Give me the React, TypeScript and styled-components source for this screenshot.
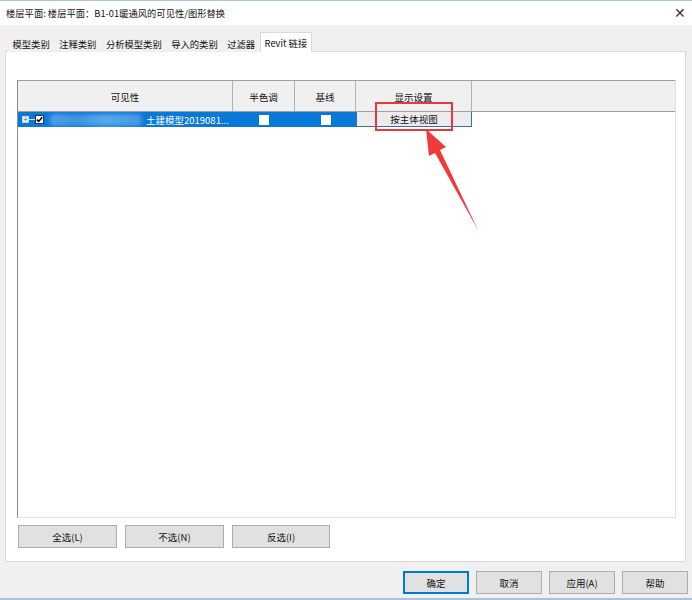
import React from 'react'
import styled, { createGlobalStyle } from 'styled-components'

const GlobalStyle = createGlobalStyle`
    html, body {
        margin: 0;
        padding: 0;
        background: #f0f0f0;
    }
    body {
        font-family: "Noto Sans CJK SC", "Microsoft YaHei", "Liberation Sans", sans-serif;
        font-size: 9.5px;
        color: #111;
    }
`

const Window = styled.div`
    position: relative;
    width: 692px;
    height: 600px;
    box-sizing: border-box;
    display: flex;
    flex-direction: column;
    background: #f0f0f0;
    border-top: 1px solid #a8c4dc;
    border-bottom: 2px solid #a8c4dc;
    overflow: hidden;
`

const TitleBar = styled.div`
    height: 24px;
    flex-shrink: 0;
    background: #ffffff;
    display: flex;
    align-items: center;
    justify-content: space-between;
    padding: 0 6px 0 6px;
    font-size: 9.3px;
`

const Close = styled.span`
    font-size: 14px;
    font-weight: 300;
    color: #333;
    line-height: 1;
    margin-top: -2px;
`

const Body = styled.div`
    flex: 1;
    display: flex;
    flex-direction: column;
    padding: 8px 6px 0 5px;
`

const TabStrip = styled.div`
    display: flex;
    align-items: flex-end;
    height: 18px;
    padding-left: 3px;
`

const Tab = styled.div<{ active?: boolean }>`
    height: ${p => (p.active ? '19px' : '16px')};
    padding: 0 3.5px;
    margin-right: ${p => (p.active ? '0' : '0.5px')};
    background: ${p => (p.active ? '#ffffff' : '#f0f0f0')};
    border: 1px solid ${p => (p.active ? '#d9d9d9' : 'transparent')};
    border-bottom: none;
    display: flex;
    align-items: center;
    font-size: 9.3px;
    white-space: nowrap;
    position: relative;
    top: 1px;
    z-index: ${p => (p.active ? 2 : 1)};
`

const TabPanel = styled.div`
    width: 681px;
    height: 511px;
    box-sizing: border-box;
    background: #ffffff;
    border: 1px solid #d9d9d9;
    display: flex;
    flex-direction: column;
    padding: 28px 9px 0 11px;
`

const GridBox = styled.div`
    height: 438px;
    box-sizing: border-box;
    border-left: 1px solid #8c8c8c;
    border-right: 1px solid #e0e0e0;
    border-bottom: 1px solid #e0e0e0;
    display: flex;
    flex-direction: column;
`

const Columns = '215px 62px 61px 116px 1fr'

const HeaderRow = styled.div`
    display: grid;
    grid-template-columns: ${Columns};
    height: 30px;
    background: #f0f0f0;
    border-top: 1px solid #a0a0a0;
    border-bottom: 1px solid #a0a0a0;
`

const HeaderCell = styled.div<{ last?: boolean }>`
    display: flex;
    align-items: center;
    justify-content: center;
    padding-top: 2px;
    border-right: ${p => (p.last ? 'none' : '1px solid #b4b4b4')};
    font-size: 9.5px;
`

const DataRow = styled.div`
    display: grid;
    grid-template-columns: ${Columns};
    height: 14px;
`

const BlueCell = styled.div<{ center?: boolean }>`
    background: #0a78d7;
    display: flex;
    align-items: center;
    justify-content: ${p => (p.center ? 'center' : 'flex-start')};
    overflow: hidden;
    color: #ffffff;
    font-size: 9.5px;
`

const Expander = styled.span`
    width: 7px;
    height: 7px;
    margin-left: 4px;
    box-sizing: border-box;
    border: 1px solid #c8d8ec;
    background: #e8eef8;
    display: flex;
    align-items: center;
    justify-content: center;
    font-size: 7px;
    line-height: 1;
    color: #555;
`

const Dash = styled.span`
    width: 6px;
    height: 1px;
    background: #d8e4f4;
`

const TickBox = styled.span<{ checked?: boolean }>`
    width: 9px;
    height: 9px;
    box-sizing: border-box;
    background: #ffffff;
    border: 1px solid #333;
    display: flex;
    align-items: center;
    justify-content: center;
`

const Blurred = styled.span`
    width: 92px;
    height: 12px;
    margin: 0 4px 0 6px;
    background: linear-gradient(90deg, #4fa0e6 0%, #3f93df 30%, #5aa8ea 60%, #4499e2 100%);
    filter: blur(2px);
    border-radius: 4px;
`

const ModelName = styled.span`
    white-space: nowrap;
`

const PlainBox = styled.span`
    width: 10px;
    height: 10px;
    box-sizing: border-box;
    background: #ffffff;
    border: 1px solid #ffffff;
`

const SettingCell = styled.div`
    background: #ececec;
    border: 1px solid #3a6da6;
    border-top: none;
    display: flex;
    align-items: center;
    justify-content: center;
    font-size: 9.5px;
`

const PanelButtons = styled.div`
    display: flex;
    gap: 8px;
    padding: 7px 0 0 1px;
`

const Button = styled.button<{ width: number; primary?: boolean }>`
    width: ${p => p.width}px;
    height: 23px;
    background: #e1e1e1;
    border: 1px solid ${p => (p.primary ? '#0078d7' : '#adadad')};
    box-shadow: ${p => (p.primary ? 'inset 0 0 0 1px #0078d7' : 'none')};
    font-family: inherit;
    font-size: 9.5px;
    color: #111;
    padding: 0;
    cursor: default;
`

const Footer = styled.div`
    display: flex;
    justify-content: flex-end;
    gap: 7px;
    padding: 9px 0 0 0;
    margin-right: -2px;
`

const Overlay = styled.svg`
    position: absolute;
    left: 0;
    top: 0;
    pointer-events: none;
`

const Check = () => (
    <svg width="7" height="7" viewBox="0 0 7 7">
        <path d="M0.8 3.6 L2.7 5.5 L6.2 1.2" stroke="#000" strokeWidth="1.5" fill="none" />
    </svg>
)

export default function App() {
    return (
        <Window>
            <GlobalStyle />
            <TitleBar>
                <span>楼层平面: 楼层平面：B1-01暖通风的可见性/图形替换</span>
                <Close>✕</Close>
            </TitleBar>
            <Body>
                <TabStrip>
                    <Tab>模型类别</Tab>
                    <Tab>注释类别</Tab>
                    <Tab>分析模型类别</Tab>
                    <Tab>导入的类别</Tab>
                    <Tab>过滤器</Tab>
                    <Tab active>Revit 链接</Tab>
                </TabStrip>
                <TabPanel>
                    <GridBox>
                        <HeaderRow>
                            <HeaderCell>可见性</HeaderCell>
                            <HeaderCell>半色调</HeaderCell>
                            <HeaderCell>基线</HeaderCell>
                            <HeaderCell>显示设置</HeaderCell>
                            <HeaderCell last />
                        </HeaderRow>
                        <DataRow>
                            <BlueCell>
                                <Expander>+</Expander>
                                <Dash />
                                <TickBox checked><Check /></TickBox>
                                <Blurred />
                                <ModelName>土建模型2019081...</ModelName>
                            </BlueCell>
                            <BlueCell center><PlainBox /></BlueCell>
                            <BlueCell center><PlainBox /></BlueCell>
                            <SettingCell>按主体视图</SettingCell>
                            <div />
                        </DataRow>
                    </GridBox>
                    <PanelButtons>
                        <Button width={99}>全选(L)</Button>
                        <Button width={99}>不选(N)</Button>
                        <Button width={98}>反选(I)</Button>
                    </PanelButtons>
                </TabPanel>
                <Footer>
                    <Button width={66} primary>确定</Button>
                    <Button width={66}>取消</Button>
                    <Button width={66}>应用(A)</Button>
                    <Button width={66}>帮助</Button>
                </Footer>
            </Body>
            <Overlay width="692" height="600" viewBox="0 0 692 600">
                <rect x="376" y="102" width="76" height="27" fill="none" stroke="#e8383d" strokeWidth="2" />
                <polygon points="426,128 446,146 440,149 478,229 435,152 429,155" fill="#f23a3a" />
            </Overlay>
        </Window>
    )
}
